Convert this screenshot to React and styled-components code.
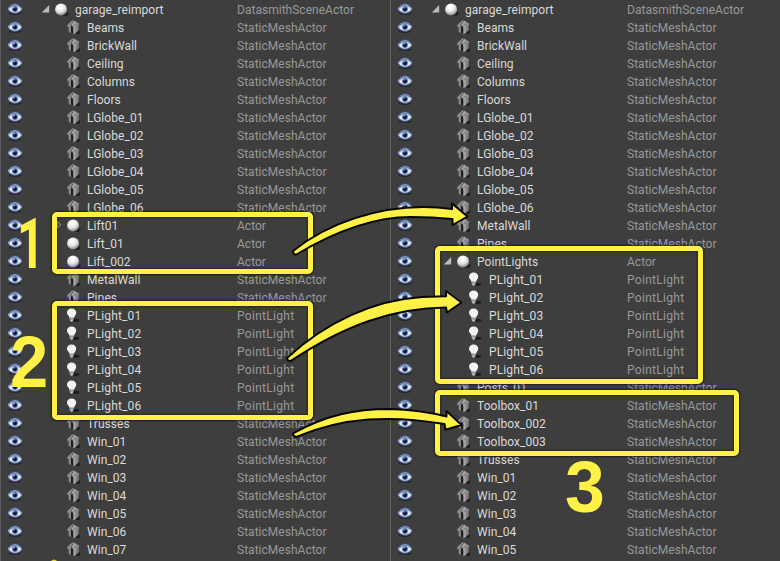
import React from "react";
import styled, { createGlobalStyle } from "styled-components";

const GlobalStyle = createGlobalStyle`
  html, body { margin: 0; background: #3e3e3e; }
  body { overflow: hidden; }
`;

const Screen = styled.main`
  position: relative;
  display: grid;
  grid-template-columns: 390px 390px;
  width: 780px;
  height: 561px;
  overflow: hidden;
  background: #3e3e3e;
  font-family: Roboto, sans-serif;
`;

const Outliner = styled.section`
  display: flex;
  flex-direction: column;
  box-sizing: border-box;
  height: 561px;
  overflow: hidden;
  border-left: 1px solid ${(p) => p.$edge};
`;

const Row = styled.div`
  display: grid;
  grid-template-columns: 40px 196px 1fr;
  align-items: center;
  flex: none;
  height: 18px;
  line-height: 18px;
  font-size: 12px;
  white-space: nowrap;
`;

const Visibility = styled.span`
  display: flex;
  padding-left: 6px;
`;

const Label = styled.span`
  display: grid;
  grid-template-columns: 14px 20px auto;
  align-items: center;
  height: 18px;
  padding-left: ${(p) => p.$depth * 12}px;
`;

const Name = styled.span`
  height: 18px;
  padding-top: 2px;
  box-sizing: border-box;
  line-height: 17px;
  color: #dadada;
  letter-spacing: ${(p) => p.$tracking}px;
`;

const Type = styled(Name)`
  color: #999;
`;

const Icon = styled.svg`
  display: block;
  overflow: visible;
`;

const Highlight = styled.div`
  position: absolute;
  box-sizing: border-box;
  left: ${(p) => p.$x}px;
  top: ${(p) => p.$y}px;
  width: ${(p) => p.$w}px;
  height: ${(p) => p.$h}px;
  border: 5px solid #fff145;
  border-radius: 5px;
  box-shadow: 0 0 2px 1px rgba(18, 18, 10, 0.75), inset 0 0 2px 1px rgba(18, 18, 10, 0.5);
`;

const Step = styled.span`
  position: absolute;
  left: ${(p) => p.$x}px;
  top: ${(p) => p.$y}px;
  font: bold ${(p) => p.$size}px/73px ${(p) => p.$face}, sans-serif;
  color: #fff145;
  transform: scaleX(${(p) => p.$stretch});
  transform-origin: left;
`;

const Arrows = styled.svg`
  position: absolute;
  inset: 0;
`;

const EyeIcon = () => (
  <Icon width="16" height="14" viewBox="0 0 16 14">
    <ellipse cx="8" cy="11.4" rx="6.5" ry="1.6" fill="#29292b" />
    <path d="M.6 7.6C2.5 3.4 5 1.5 8.2 1.5s5.6 2.1 7 6.1c-2.2 3-4.4 4.1-7.2 4.1-3 0-5.4-1.3-7.4-4.1Z" fill="#5671a8" />
    <path d="M1.8 7.5C3.5 4.8 5.4 3.7 8 3.7s4.7 1.2 6.2 3.8c-1.9 2.2-3.8 3.1-6.2 3.1s-4.4-.9-6.2-3.1Z" fill="#e0e8f8" />
    <path d="M1 7.1C3 3.8 5.1 2.6 8 2.6s5.1 1.4 6.7 4.5" fill="none" stroke="#a9badf" strokeWidth=".9" />
    <path d="M2.3 5.4C4 3 5.8 1.8 8.2 1.8s4.2 1.2 5.4 3.4" fill="none" stroke="#344568" strokeWidth=".7" />
    <circle cx="8" cy="7" r="2.9" fill="#5474a4" />
    <circle cx="8" cy="7.1" r="1.9" fill="#08132b" />
    <circle cx="7.2" cy="5.7" r=".7" fill="#c8d9f3" />
  </Icon>
);

const MeshIcon = () => (
  <Icon width="14" height="14" viewBox="0 0 14 14">
    <path d="m9 14 1-3.4 2.8-.6v4Z" fill="#202020" />
    <path d="M3.8 6.5 6.6 5l1 2v6.3l-3.8-.9Z" fill="#1e1e1e" />
    <path d="M1.6 5.6 4 5v8l-2.4-1.2Z" fill="#858585" />
    <path d="m6.3 6.4 2.6-1.6v8.3l-2.6 1.2Z" fill="#a4a4a4" />
    <path d="m8.9 4.6 2.6-1v7.2l-2.6 1.7Z" fill="#858585" />
    <path d="M.4 7.2V5L5.2.6l1.6-.2L3 6.2Z" fill="#929292" />
    <path d="M3.8 5.4 7 .6l4.8 2.8v1.8L9 5 6.3 8.2 5.4 5.8Z" fill="#a2a2a2" />
    <path d="M3 5.7 6.4 1.6M6.4 6l2.7-2.3 1.8.8" fill="none" stroke="#4b4b4b" strokeWidth=".6" />
  </Icon>
);

const SphereIcon = () => (
  <Icon width="14" height="14" viewBox="0 0 14 14">
    <defs>
      <radialGradient id="sphere" cx="42%" cy="30%" r="67%">
        <stop offset=".2" stopColor="#fff" />
        <stop offset=".65" stopColor="#dedede" />
        <stop offset="1" stopColor="#8b8b8b" />
      </radialGradient>
    </defs>
    <ellipse cx="9.5" cy="11.8" rx="4.2" ry="2" fill="#202020" />
    <circle cx="6.1" cy="7.4" r="6" fill="url(#sphere)" />
  </Icon>
);

const BulbIcon = () => (
  <Icon width="14" height="14" viewBox="0 0 14 14">
    <ellipse cx="8.8" cy="12.3" rx="3.6" ry="1.6" fill="#1c1c1c" />
    <path d="M0 4.8C0 2 1.8.4 4.6.4s4.6 1.6 4.6 4.3c0 2.3-1.6 3-2.2 5H2.5C2 7.7 0 7 0 4.8Z" fill="#f3f3f3" />
    <path d="M2.7 9.1h3.8v3L5.3 13.7H4l-1.3-1.6Z" fill="#c3c3c3" />
    <path d="m2.9 10.1 3.4.5m-3.3.8 3.2.5" stroke="#777" strokeWidth=".5" />
  </Icon>
);

const Expander = ({ state }) => (
  <Icon width="10" height="12" viewBox="0 0 10 12">
    {state === "open" && <path d="M8.2 2v7.5H.8Z" fill="#bababa" />}
    {state === "closed" && <path d="m4.6 2.3 3.1 3.3-3.1 3.3Z" fill="none" stroke="#bbb" strokeWidth=".8" />}
  </Icon>
);

const ICONS = { mesh: MeshIcon, actor: SphereIcon, light: BulbIcon };
const TYPES = { mesh: "StaticMeshActor", actor: "Actor", light: "PointLight" };
const TRACKING = { mesh: 0.02, actor: 0.02, light: 0.3 };

const mesh = (name) => ({ name, kind: "mesh", depth: 1 });
const actor = (name, state) => ({ name, kind: "actor", depth: 1, state });
const light = (name, depth) => ({ name, kind: "light", depth });
const series = (prefix, count) => Array.from({ length: count }, (_, i) => `${prefix}_0${i + 1}`);

const sharedRows = [
  { name: "garage_reimport", kind: "actor", type: "DatasmithSceneActor", depth: 0, state: "open" },
  ...["Beams", "BrickWall", "Ceiling", "Columns", "Floors", ...series("LGlobe", 6)].map(mesh),
];

const beforeRows = [
  ...sharedRows,
  actor("Lift01", "closed"), actor("Lift_01"), actor("Lift_002"),
  mesh("MetalWall"), mesh("Pipes"),
  ...series("PLight", 6).map((n) => light(n, 1)),
  mesh("Trusses"),
  ...series("Win", 7).map(mesh),
];

const afterRows = [
  ...sharedRows,
  mesh("MetalWall"), mesh("Pipes"),
  actor("PointLights", "open"),
  ...series("PLight", 6).map((n) => light(n, 2)),
  ...["Posts_01", "Toolbox_01", "Toolbox_002", "Toolbox_003", "Trusses", ...series("Win", 5)].map(mesh),
];

function ActorRow({ item }) {
  const KindIcon = ICONS[item.kind];
  return (
    <Row>
      <Visibility><EyeIcon /></Visibility>
      <Label $depth={item.depth}>
        <Expander state={item.state} />
        <KindIcon />
        <Name $tracking={item.kind === "light" ? 0.14 : 0.05}>{item.name}</Name>
      </Label>
      <Type $tracking={TRACKING[item.kind]}>{item.type || TYPES[item.kind]}</Type>
    </Row>
  );
}

export default function App() {
  return (
    <>
      <GlobalStyle />
      <Screen>
        <Outliner $edge="#5c5c5c">{beforeRows.map((r) => <ActorRow key={r.name} item={r} />)}</Outliner>
        <Outliner $edge="#676767">{afterRows.map((r) => <ActorRow key={r.name} item={r} />)}</Outliner>

        <Highlight $x={52} $y={212} $w={261} $h={62} />
        <Highlight $x={52} $y={301} $w={261} $h={119} />
        <Highlight $x={435} $y={246} $w={268} $h={138} />
        <Highlight $x={435} $y={390} $w={304} $h={66} />

        <Arrows width="780" height="561" viewBox="0 0 780 561">
          <g fill="#fff145" stroke="#080804" strokeWidth="2" strokeLinejoin="round">
            <path d="M293 251C329 222 379 207 423 207Q438 207 452 209V203.5L467.5 216.5 452.5 225V219Q432 217 411 217C371 217 329 235 296.5 254.5Q293 255 293 251Z" />
            <path d="M287 358C326 322 374 300 422 297L446 296.3V291L461.5 302.5 447 312.5 446 307.5C393 308 345 325 290.5 361.2Q287 361 287 358Z" />
            <path d="M293 433.5C326 415 356 409 389 409Q421 410 446.5 416.5V411L461.5 425 445.5 429.7 444.5 424C391 415 344 417 297 436.7Q293 437 293 433.5Z" />
          </g>
          <path d="M51 561q3-3 6 0Z" fill="#e5d32c" />
        </Arrows>

        <Step $x={17} $y={208} $size={70} $face="Roboto" $stretch={0.68}>1</Step>
        <Step $x={10} $y={325} $size={73} $face='"Liberation Sans"' $stretch={0.94}>2</Step>
        <Step $x={565} $y={450} $size={73} $face='"Liberation Sans"' $stretch={0.98}>3</Step>
      </Screen>
    </>
  );
}
